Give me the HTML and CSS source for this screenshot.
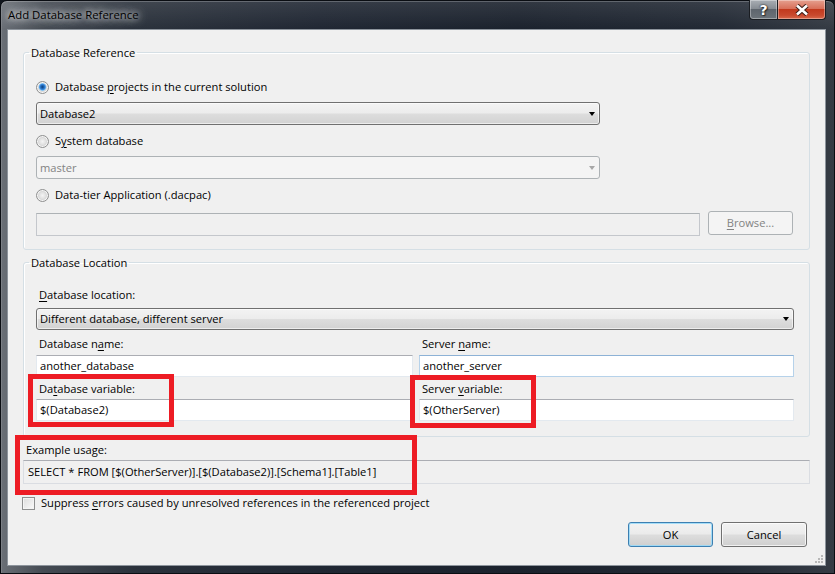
FILE: index.html
```html
<!DOCTYPE html>
<html lang="en">
<head>
<meta charset="utf-8">
<title>Add Database Reference</title>
<link rel="stylesheet" href="styles.css">
</head>
<body>
<div class="window">
  <div class="titlebar">
    <span class="title">Add Database Reference</span>
    <div class="caption">
      <div class="cap-btn help"><span>?</span></div>
      <div class="cap-btn close">
        <svg width="16" height="12" viewBox="0 0 16 12"><path d="M3 1.5 L13 10.5 M13 1.5 L3 10.5" stroke="#3a1c16" stroke-width="4.6"/><path d="M3 1.5 L13 10.5 M13 1.5 L3 10.5" stroke="#ffffff" stroke-width="2.6"/></svg>
      </div>
    </div>
  </div>
  <div class="client">
    <fieldset class="group">
      <legend>Database Reference</legend>
      <div class="gbody ref">
        <div class="option"><span class="radio on"></span><span>Database <u>p</u>rojects in the current solution</span></div>
        <div class="combo"><span>Database2</span><i class="arrow"></i></div>
        <div class="option gap8"><span class="radio"></span><span>S<u>y</u>stem database</span></div>
        <div class="combo disabled"><span>master</span><i class="arrow"></i></div>
        <div class="option gap8"><span class="radio"></span><span>Data-tier Application (.dacpac)</span></div>
        <div class="file-row">
          <div class="textbox disabled"></div>
          <div class="button disabled"><u>B</u>rowse...</div>
        </div>
      </div>
    </fieldset>

    <fieldset class="group loc-group">
      <legend>Database Location</legend>
      <div class="gbody loc">
        <div class="label"><u>D</u>atabase location:</div>
        <div class="combo wide"><span>Different database, different server</span><i class="arrow"></i></div>
        <div class="fields">
          <div class="label">Database n<u>a</u>me:</div>
          <div class="label">Server <u>n</u>ame:</div>
          <div class="textbox"><span>another_database</span></div>
          <div class="textbox focus"><span>another_server</span></div>
          <div class="label">Da<u>t</u>abase variable:</div>
          <div class="label">Server <u>v</u>ariable:</div>
          <div class="textbox"><span>$(Database2)</span></div>
          <div class="textbox"><span>$(OtherServer)</span></div>
        </div>
      </div>
    </fieldset>

    <div class="label example-label">Example usage:</div>
    <div class="example"><span>SELECT * FROM [$(OtherServer)].[$(Database2)].[Schema1].[Table1]</span></div>

    <div class="check-row"><span class="checkbox"></span><span>Suppress <u>e</u>rrors caused by unresolved references in the referenced project</span></div>

    <div class="buttons">
      <div class="button default">OK</div>
      <div class="button">Cancel</div>
    </div>

    <div class="annot a1"></div>
    <div class="annot a2"></div>
    <div class="annot a3"></div>

    <svg class="grip" width="9" height="9" viewBox="0 0 9 9">
      <rect x="7" y="1" width="2" height="2" fill="#b8b8b8"/>
      <rect x="4" y="4" width="2" height="2" fill="#b8b8b8"/>
      <rect x="7" y="4" width="2" height="2" fill="#b8b8b8"/>
      <rect x="1" y="7" width="2" height="2" fill="#b8b8b8"/>
      <rect x="4" y="7" width="2" height="2" fill="#b8b8b8"/>
      <rect x="7" y="7" width="2" height="2" fill="#b8b8b8"/>
    </svg>
  </div>
</div>
</body>
</html>
```
FILE: styles.css
```css
* { box-sizing: border-box; }
html, body { margin: 0; padding: 0; }
body {
  width: 835px; height: 574px; overflow: hidden;
  background: #11161d;
  font-family: "Open Sans", "Noto Sans", "DejaVu Sans", sans-serif;
  font-size: 11.15px; color: #000;
}
u { text-decoration-thickness: 1px; text-underline-offset: 1.5px; }

.window {
  position: relative;
  width: 835px; height: 574px;
  border: 1px solid #0a0d12;
  border-radius: 7px 7px 0 0;
  background:
    linear-gradient(to bottom, rgba(255,255,255,0.10), rgba(255,255,255,0) 28px),
    linear-gradient(to right, #6a6f76 0, #454b53 5%, #2b323c 16%, #202733 38%, #1b222d 62%, #222934 86%, #353b44 100%);
  display: flex; flex-direction: column;
  padding: 0 8px 7px 6px;
  box-shadow: inset 0 1px 0 rgba(255,255,255,0.22), inset 1px 0 0 rgba(255,255,255,0.12);
}

.titlebar {
  height: 28px; flex: none;
  display: flex; justify-content: space-between; align-items: flex-start;
}
.title {
  margin-top: 6px; margin-left: 1px;
  line-height: 16px; font-size: 11.4px; color: #000;
  text-shadow: 0 0 6px rgba(255,255,255,0.95), 0 0 10px rgba(240,242,245,0.85), 0 0 16px rgba(220,224,228,0.7);
}
.caption { display: flex; margin-top: -1px; }
.cap-btn {
  height: 20px;
  display: flex; align-items: center; justify-content: center;
  border: 1px solid #1a1d22;
  border-top: none;
  box-shadow: inset 0 0 0 1px rgba(255,255,255,0.35);
}
.help {
  width: 28px;
  border-radius: 0 0 0 4px;
  border-right: none;
  background: linear-gradient(to bottom, #a9aeb4 0%, #878d94 45%, #5e656d 50%, #6c737a 100%);
  color: #fff; font-weight: bold; font-size: 14px; font-family: "DejaVu Sans", sans-serif;
  text-shadow: 0 0 2px #222, 0 0 1px #222, 1px 1px 1px #333;
}
.close {
  width: 49px;
  border-radius: 0 0 4px 0;
  background: linear-gradient(to bottom, #e5a08f 0%, #d8705a 45%, #c23a1e 50%, #c9492e 80%, #d96a4c 100%);
}

.client {
  flex: 1;
  position: relative;
  background: #f0f0f0;
  border: 1px solid #8d949c;
  padding: 15px 15px 0 15px;
}

.group {
  margin: 0; padding: 0;
  min-width: 0;
  border: 1px solid #d5dfe5;
  border-radius: 3px;
  box-shadow: inset 1px 1px 0 #fff;
}
.group legend {
  padding: 0 2px; margin-left: 5px;
  line-height: 15px;
}
.loc-group { margin-top: 5px; }

.gbody.ref { padding: 19px 16px 13px 12px; }
.gbody.loc { padding: 17px 15px 15px 12px; }

.option {
  display: flex; align-items: center;
  height: 16px; line-height: 16px;
}
.option.gap8 { margin-top: 8px; }

.radio {
  width: 13px; height: 13px; flex: none;
  border-radius: 50%;
  border: 1px solid #8e8f8f;
  margin-right: 6px;
  background: radial-gradient(circle at 50% 50%, #f4f4f4 0, #e2e2e2 3px, #d0d0d0 5px, #f8f8f8 6px);
  box-shadow: inset 0 0 0 1px #f6f6f6;
}
.radio.on {
  background:
    radial-gradient(circle at 50% 45%, #0b3f7a 0, #1f63b0 1.5px, #3e8ee0 2.8px, #8cc6f2 3.6px, rgba(255,255,255,0) 4.2px),
    radial-gradient(circle at 50% 50%, #f4f4f4 0, #e2e2e2 3px, #d0d0d0 5px, #f8f8f8 6px);
}

.combo {
  width: 564px; height: 23px;
  margin-top: 7px;
  border: 1px solid #707070;
  border-radius: 3px;
  background: linear-gradient(to bottom, #f3f3f3 0%, #ececec 48%, #dddddd 52%, #d2d2d2 100%);
  box-shadow: inset 0 0 0 1px rgba(255,255,255,0.6);
  display: flex; align-items: center; justify-content: space-between;
  padding: 0 4px 0 3px;
  line-height: 16px;
}
.combo.wide { width: 758px; height: 22px; margin-top: 5px; }
.arrow {
  width: 0; height: 0;
  border-left: 3.5px solid transparent;
  border-right: 3.5px solid transparent;
  border-top: 4px solid #000;
}
.combo.disabled {
  border-color: #adb2b5;
  background: #f4f4f4;
  box-shadow: none;
  color: #838383;
}
.combo.disabled .arrow { border-top-color: #a7a7a7; }

.file-row {
  display: flex; gap: 8px;
  height: 25px; margin-top: 8px;
}
.file-row .textbox { flex: 1; height: 23px; margin-top: 2px; }
.file-row .button { width: 85px; height: 24px; }

.textbox {
  height: 22px;
  border: 1px solid #e3e9ef;
  border-top-color: #abadb3;
  background: #fff;
  display: flex; align-items: center;
  padding: 0 3px;
  line-height: 16px;
}
.textbox.disabled {
  background: #f0f0f0;
  border-color: #c4c7cc;
  border-top-color: #adb2b5;
}
.textbox.focus {
  border-color: #b6d2ea;
  border-top-color: #8db2d6;
}

.label { height: 16px; line-height: 16px; padding-left: 3px; }

.fields {
  display: grid;
  grid-template-columns: 377px 1fr;
  column-gap: 6px;
}
.fields > .label:nth-child(1), .fields > .label:nth-child(2) { margin-top: 6px; }
.fields > .textbox:nth-child(3), .fields > .textbox:nth-child(4) { margin-top: 3px; }
.fields > .label:nth-child(5), .fields > .label:nth-child(6) { margin-top: 4px; }
.fields > .textbox:nth-child(7), .fields > .textbox:nth-child(8) { margin-top: 2px; }

.example-label { margin-top: 5px; }
.example {
  margin-top: 2px;
  height: 24px;
  border: 1px solid #dadde2;
  border-top-color: #abadb3;
  background: #f0f0f0;
  display: flex; align-items: center;
  padding: 0 4px;
  line-height: 16px;
}

.check-row {
  display: flex; align-items: center;
  height: 16px; line-height: 16px;
  margin-top: 11px; margin-left: -1px;
}
.checkbox {
  width: 13px; height: 13px; flex: none;
  border: 1px solid #8e8f8f;
  margin-right: 6px;
  background: linear-gradient(135deg, #dcdcdc 0%, #eeeeee 60%, #fbfbfb 100%);
  box-shadow: inset 0 0 0 1px #f4f4f4;
}

.buttons {
  display: flex; justify-content: flex-end; gap: 8px;
  margin-top: 11px;
  padding-right: 3px;
}
.button {
  width: 86px; height: 25px;
  border: 1px solid #707070;
  border-radius: 3px;
  background: linear-gradient(to bottom, #f2f2f2 0%, #ebebeb 48%, #dddddd 52%, #cfcfcf 100%);
  box-shadow: inset 0 0 0 1px rgba(255,255,255,0.7);
  display: flex; align-items: center; justify-content: center;
  line-height: 16px;
}
.button.default {
  width: 85px;
  border-color: #3c7fb1;
  box-shadow: inset 0 0 0 1px rgba(150,217,249,0.85);
}
.button.disabled {
  border-color: #adb2b5;
  background: #f4f4f4;
  box-shadow: none;
  color: #838383;
}

.annot {
  position: absolute;
  border: 5px solid #ed1c24;
}
.a1 { left: 20px; top: 344px; width: 146px; height: 53px; }
.a2 { left: 402px; top: 345px; width: 126px; height: 53px; }
.a3 { left: 7px; top: 405px; width: 402px; height: 60px; }

.grip { position: absolute; right: 2px; bottom: 2px; }
```
